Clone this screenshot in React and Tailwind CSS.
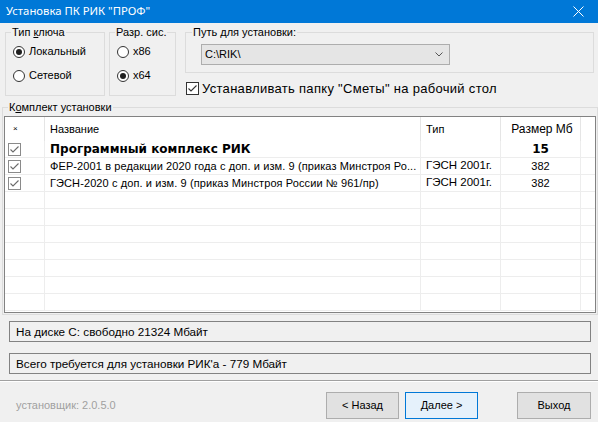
import React from 'react';

const Radio = ({ checked, label }) => (
    <div className="flex h-[13px] items-center">
        <span className="flex h-[12px] w-[12px] shrink-0 items-center justify-center rounded-full border border-[#333333] bg-white">
            {checked && <span className="h-[6px] w-[6px] rounded-full bg-[#1f1f1f]" />}
        </span>
        <span className="ml-[4px] whitespace-nowrap leading-[13px]">{label}</span>
    </div>
);

const CheckMark = ({ stroke }) => (
    <svg width="11" height="11" viewBox="0 0 11 11">
        <path d="M1.5 5.5 L4 8 L9.5 2.5" fill="none" stroke={stroke} strokeWidth="1.1" />
    </svg>
);

const rows = [
    { name: 'Программный комплекс РИК', type: '', size: '15', bold: true },
    { name: 'ФЕР-2001 в редакции 2020 года с доп. и изм. 9 (приказ Минстроя Ро...', type: 'ГЭСН 2001г.', size: '382' },
    { name: 'ГЭСН-2020 с доп. и изм. 9 (приказ Минстроя России № 961/пр)', type: 'ГЭСН 2001г.', size: '382' },
];

const blank = Array.from({ length: 7 });

const App = () => {
    return (
        <div className="h-[422px] w-[598px] overflow-hidden bg-[#f0f0f0] font-['Liberation_Sans',Arial,sans-serif] text-[11px] text-black">
            {/* Title bar */}
            <div className="flex h-[23px] items-center justify-between bg-[#0078d7] pl-[6px] pr-[14px] text-white">
                <span className="font-['Noto_Sans',sans-serif] text-[11.3px]">Установка ПК РИК "ПРОФ"</span>
                <svg width="11" height="11" viewBox="0 0 11 11">
                    <path d="M0.5 0.5 L10.5 10.5 M10.5 0.5 L0.5 10.5" stroke="white" strokeWidth="1" />
                </svg>
            </div>

            {/* Top options */}
            <div className="flex pt-[3px]">
                <fieldset className="ml-[5px] h-[70px] w-[100px] border border-[#dcdcdc] pl-[7px]">
                    <legend className="-ml-[2px] whitespace-nowrap px-[1px] leading-[13px]">
                        Тип <span className="underline">к</span>люча
                    </legend>
                    <div className="mt-[6px]"><Radio checked label="Локальный" /></div>
                    <div className="mt-[11px]"><Radio label="Сетевой" /></div>
                </fieldset>

                <fieldset className="ml-[4px] h-[70px] w-[67px] border border-[#dcdcdc] pl-[7px]">
                    <legend className="-ml-[2px] whitespace-nowrap px-[1px] leading-[13px]">Разр. сис.</legend>
                    <div className="mt-[6px]"><Radio label="x86" /></div>
                    <div className="mt-[11px]"><Radio checked label="x64" /></div>
                </fieldset>

                <div className="ml-[9px] flex flex-col">
                    <fieldset className="h-[47px] w-[409px] border border-[#dcdcdc] pl-[15px]">
                        <legend className="-ml-[9px] whitespace-nowrap px-[1px] leading-[13px]">Путь для установки:</legend>
                        <div className="mt-[5px] flex h-[21px] w-[249px] items-center justify-between border border-[#adadad] bg-[#e5e5e5] pl-[3px] pr-[6px]">
                            <span>C:\RIK\</span>
                            <svg width="8" height="5" viewBox="0 0 8 5">
                                <path d="M0.5 0.5 L4 4 L7.5 0.5" fill="none" stroke="#555" strokeWidth="1" />
                            </svg>
                        </div>
                    </fieldset>
                    <div className="ml-[1px] mt-[9px] flex items-center">
                        <span className="flex h-[13px] w-[13px] items-center justify-center border border-[#333333] bg-white">
                            <CheckMark stroke="#333333" />
                        </span>
                        <span className="ml-[3px] whitespace-nowrap text-[13px] leading-[13px] tracking-[0.3px]">Устанавливать папку "Сметы" на рабочий стол</span>
                    </div>
                </div>
            </div>

            {/* Install set */}
            <fieldset className="ml-[2px] mt-[5px] h-[214px] w-[596px] border border-[#dcdcdc] px-[1px] pb-[1px]">
                <legend className="ml-[4px] px-[1px] leading-[13px]">
                    К<span className="underline">о</span>мплект установки
                </legend>
                <div className="mt-[2px] h-[197px] overflow-hidden border border-[#828282] bg-white">
                    <div className="flex h-[24px] items-center">
                        <div className="flex h-full w-[40px] items-center border-r border-[#e5e5e5] pl-[8px] text-[8px]">×</div>
                        <div className="flex h-full w-[376px] items-center border-r border-[#e5e5e5] pl-[5px]">Название</div>
                        <div className="flex h-full w-[80px] items-center border-r border-[#e5e5e5] pl-[5px]">Тип</div>
                        <div className="flex h-full w-[80px] items-center justify-center border-r border-[#e5e5e5] pl-[3px] text-[12px]">Размер Мб</div>
                    </div>
                    {rows.map((r, i) => (
                        <div key={i} className="flex h-[17px] border-b border-[#ededed]">
                            <div className="flex h-full w-[40px] items-center border-r border-[#ededed] pl-[3px]">
                                <span className="flex h-[13px] w-[13px] items-center justify-center border border-[#8a8a8a] bg-white">
                                    <CheckMark stroke="#6a6a6a" />
                                </span>
                            </div>
                            <div className={r.bold ? "flex h-full w-[376px] items-center overflow-hidden whitespace-nowrap border-r border-[#ededed] pl-[5px] font-['DejaVu_Sans',sans-serif] text-[12px] font-bold" : 'flex h-full w-[376px] items-center overflow-hidden whitespace-nowrap border-r border-[#ededed] pl-[5px] tracking-[0.1px]'}>
                                {r.name}
                            </div>
                            <div className="flex h-full w-[80px] items-center border-r border-[#ededed] pl-[5px] text-[11.5px]">{r.type}</div>
                            <div className={r.bold ? "flex h-full w-[80px] items-center justify-center border-r border-[#ededed] font-['DejaVu_Sans',sans-serif] text-[12px] font-bold" : 'flex h-full w-[80px] items-center justify-center border-r border-[#ededed]'}>
                                {r.size}
                            </div>
                        </div>
                    ))}
                    {blank.map((_, i) => (
                        <div key={i} className="flex h-[17px] border-b border-[#ededed]">
                            <div className="h-full w-[40px] border-r border-[#ededed]" />
                            <div className="h-full w-[376px] border-r border-[#ededed]" />
                            <div className="h-full w-[80px] border-r border-[#ededed]" />
                            <div className="h-full w-[80px] border-r border-[#ededed]" />
                        </div>
                    ))}
                </div>
            </fieldset>

            {/* Disk info */}
            <div className="ml-[9px] mt-[6px] flex h-[21px] w-[582px] items-center border border-[#828282] pl-[6px] text-[11.7px]">
                На диске C: свободно 21324 Мбайт
            </div>
            <div className="ml-[9px] mt-[11px] flex h-[21px] w-[582px] items-center border border-[#828282] pl-[6px] text-[11.7px]">
                Всего требуется для установки РИК'а - 779 Мбайт
            </div>

            <div className="mt-[6px] h-[2px] border-t border-b border-t-[#a0a0a0] border-b-white" />

            {/* Footer */}
            <div className="mt-[10px] flex items-center">
                <div className="w-[326px] pl-[16px] text-[#a0a0a0]">установщик: 2.0.5.0</div>
                <button className="flex h-[27px] w-[73px] items-center justify-center border border-[#adadad] bg-[#e1e1e1]">&lt; Назад</button>
                <button className="ml-[6px] flex h-[27px] w-[73px] items-center justify-center border border-[#0078d7] bg-[#e5f1fb]">Далее &gt;</button>
                <button className="ml-[39px] flex h-[27px] w-[74px] items-center justify-center border border-[#adadad] bg-[#e1e1e1]">Выход</button>
            </div>
        </div>
    );
};

export default App;
